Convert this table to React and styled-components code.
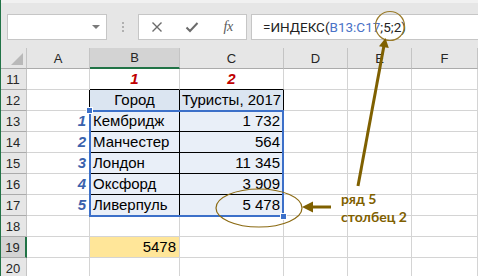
import React from 'react';
import styled, { createGlobalStyle } from 'styled-components';

const GlobalStyle = createGlobalStyle`
  html, body {
    margin: 0;
    padding: 0;
    background: #fff;
  }
  body {
    width: 478px;
    height: 276px;
    overflow: hidden;
    font-family: "Liberation Sans", Arial, sans-serif;
  }
`;

const Window = styled.div`
  position: relative;
  width: 478px;
  height: 276px;
  overflow: hidden;
  &::before {
    content: '';
    position: absolute;
    left: 0;
    top: 0;
    bottom: 0;
    width: 1px;
    background: #217346;
    z-index: 6;
  }
`;

const Toolbar = styled.div`
  box-sizing: border-box;
  height: 48px;
  background: #e6e6e6;
  border-top: 3px solid #f1f1f1;
  display: flex;
  align-items: flex-start;
  padding: 11px 0 0 7px;
`;

const NameBox = styled.div`
  box-sizing: border-box;
  width: 100px;
  height: 26px;
  background: #fff;
  border: 1px solid #c6c6c6;
  display: flex;
  align-items: center;
  justify-content: flex-end;
  padding-right: 6px;
`;

const DropArrow = styled.span`
  width: 0;
  height: 0;
  border-left: 4px solid transparent;
  border-right: 4px solid transparent;
  border-top: 4px solid #7a7a7a;
`;

const Grip = styled.div`
  width: 31px;
  height: 26px;
  display: flex;
  flex-direction: column;
  align-items: center;
  justify-content: center;
  gap: 2px;
  span {
    width: 2px;
    height: 2px;
    background: #b0b0b0;
  }
`;

const FxBox = styled.div`
  box-sizing: border-box;
  width: 109px;
  height: 26px;
  background: #fff;
  border: 1px solid #c6c6c6;
  display: grid;
  grid-template-columns: repeat(3, 1fr);
  align-items: center;
  justify-items: center;
`;

const FxText = styled.span`
  font-family: "Liberation Serif", "Times New Roman", serif;
  font-style: italic;
  font-size: 14px;
  color: #5a5a5a;
  letter-spacing: -0.5px;
`;

const FormulaInput = styled.div`
  box-sizing: border-box;
  flex: 1;
  margin-left: 4px;
  height: 26px;
  background: #fff;
  border: 1px solid #c6c6c6;
  border-right: none;
  padding-left: 11px;
  font-family: Roboto, "Liberation Sans", sans-serif;
  font-size: 13.5px;
  line-height: 24px;
  color: #222;
  white-space: nowrap;
`;

const RangeRef = styled.span`
  color: #4a72c7;
`;

const Sheet = styled.div`
  position: relative;
  display: grid;
  grid-template-columns: 27px 63px 90px 104px 64px 64px 66px;
  grid-template-rows: 21px repeat(10, 21px);
`;

const HeadCell = styled.div`
  box-sizing: border-box;
  background: ${p => (p.$active ? '#d3d3d3' : '#e6e6e6')};
  border-right: ${p => (p.$activeRow ? '2px solid #217346' : '1px solid #c4c4c4')};
  border-bottom: ${p => (p.$active && !p.$activeRow ? '2px solid #217346' : '1px solid #ababab')};
  font-family: "Liberation Sans", Arial, sans-serif;
  font-size: 13px;
  color: #262626;
  display: flex;
  align-items: center;
  justify-content: center;
`;

const Corner = styled(HeadCell)`
  position: relative;
  &::after {
    content: '';
    position: absolute;
    right: 3px;
    bottom: 3px;
    width: 0;
    height: 0;
    border-left: 12px solid transparent;
    border-bottom: 12px solid #b9b9b9;
  }
`;

const Cell = styled.div`
  box-sizing: border-box;
  border-right: 1px solid ${p => p.$rb || '#d4d4d4'};
  border-bottom: 1px solid ${p => p.$bb || '#d4d4d4'};
  background: ${p => p.$bg || '#fff'};
  color: ${p => p.$color || '#000'};
  font-size: 15px;
  font-weight: ${p => (p.$strong ? 700 : 400)};
  font-style: ${p => (p.$strong ? 'italic' : 'normal')};
  line-height: 20px;
  padding: 0 ${p => (p.$tight ? 0 : 3)}px;
  text-align: ${p => p.$align || 'left'};
  white-space: nowrap;
`;

/* range highlight drawn over B13:C17; absolute so it takes no grid slot */
const Selection = styled.div`
  position: absolute;
  box-sizing: border-box;
  grid-column: 3 / 5;
  grid-row: 4 / 9;
  top: -1px;
  bottom: -1px;
  left: -1px;
  right: 0;
  border: 2px solid #3c70c9;
  pointer-events: none;
  z-index: 2;
  &::before,
  &::after {
    content: '';
    position: absolute;
    width: 5px;
    height: 5px;
    background: #3c70c9;
    border: 1px solid #fff;
  }
  &::before {
    left: -5px;
    top: -5px;
  }
  &::after {
    right: -5px;
    bottom: -5px;
  }
`;

const Marks = styled.svg`
  position: absolute;
  left: 0;
  top: 0;
  z-index: 5;
  pointer-events: none;
`;

const Note = styled.div`
  position: absolute;
  left: 341px;
  top: 190px;
  z-index: 5;
  font-family: Lato, "Open Sans", sans-serif;
  font-weight: 700;
  font-size: 14px;
  line-height: 18px;
  color: #7f6000;
`;

const cols = ['A', 'B', 'C', 'D', 'E', 'F'];

const cities = [
  ['1', 'Кембридж', '1 732'],
  ['2', 'Манчестер', '564'],
  ['3', 'Лондон', '11 345'],
  ['4', 'Оксфорд', '3 909'],
  ['5', 'Ливерпуль', '5 478'],
];

const HEAD_BG = '#dbe5f1';
const BODY_BG = '#e9eff8';
const INK = '#000';

function EmptyTail({ row }) {
  return ['D', 'E', 'F'].map(c => <Cell key={c + row} />);
}

export default function App() {
  return (
    <Window>
      <GlobalStyle />
      <Toolbar>
        <NameBox>
          <DropArrow />
        </NameBox>
        <Grip>
          <span />
          <span />
          <span />
        </Grip>
        <FxBox>
          <svg width="12" height="12" viewBox="0 0 12 12">
            <path d="M1.5 1.5 L10.5 10.5 M10.5 1.5 L1.5 10.5" stroke="#6b6b6b" strokeWidth="1.4" />
          </svg>
          <svg width="14" height="12" viewBox="0 0 14 12">
            <path d="M1.5 6.5 L5 10 L12.5 2" stroke="#6b6b6b" strokeWidth="2" fill="none" />
          </svg>
          <FxText>fx</FxText>
        </FxBox>
        <FormulaInput>
          =ИНДЕКС(<RangeRef>B13:C17</RangeRef>;5;2)
        </FormulaInput>
      </Toolbar>

      <Sheet>
        <Corner />
        {cols.map(c => (
          <HeadCell key={c} $active={c === 'B'}>{c}</HeadCell>
        ))}

        <HeadCell>11</HeadCell>
        <Cell />
        <Cell $bb={INK} $color="#c00000" $strong $align="center">1</Cell>
        <Cell $bb={INK} $color="#c00000" $strong $align="center">2</Cell>
        <EmptyTail row={11} />

        <HeadCell>12</HeadCell>
        <Cell $rb={INK} />
        <Cell $rb={INK} $bb={INK} $bg={HEAD_BG} $align="center">Город</Cell>
        <Cell $rb={INK} $bb={INK} $bg={HEAD_BG} $align="center" $tight>Туристы, 2017</Cell>
        <EmptyTail row={12} />

        {cities.map(([n, city, value], i) => (
          <React.Fragment key={n}>
            <HeadCell>{13 + i}</HeadCell>
            <Cell $rb={INK} $color="#3a62ad" $strong $align="right">{n}</Cell>
            <Cell $rb={INK} $bb={INK} $bg={BODY_BG}>{city}</Cell>
            <Cell $rb={INK} $bb={INK} $bg={BODY_BG} $align="right">{value}</Cell>
            <EmptyTail row={13 + i} />
          </React.Fragment>
        ))}

        <HeadCell>18</HeadCell>
        <Cell />
        <Cell />
        <Cell />
        <EmptyTail row={18} />

        <HeadCell $active $activeRow>19</HeadCell>
        <Cell />
        <Cell $bg="#ffe699" $align="right">5478</Cell>
        <Cell />
        <EmptyTail row={19} />

        <HeadCell>20</HeadCell>
        <Cell />
        <Cell />
        <Cell />
        <EmptyTail row={20} />

        <Selection />
      </Sheet>

      <Marks width="478" height="276" viewBox="0 0 478 276">
        <circle cx="390" cy="26" r="14.5" fill="none" stroke="#9a7b2a" strokeWidth="1.2" />
        <line x1="358" y1="186" x2="383.9" y2="46" stroke="#7f6000" strokeWidth="3" />
        <polygon points="385.5,38 388.8,48 379,46.2" fill="#7f6000" />
        <ellipse cx="259" cy="208" rx="43" ry="19" fill="none" stroke="#8b6a12" strokeWidth="1.2" />
        <line x1="331" y1="207" x2="311" y2="207" stroke="#7f6000" strokeWidth="3" />
        <polygon points="302,207 313,201.5 313,212.5" fill="#7f6000" />
      </Marks>
      <Note>
        ряд 5
        <br />
        столбец 2
      </Note>
    </Window>
  );
}
